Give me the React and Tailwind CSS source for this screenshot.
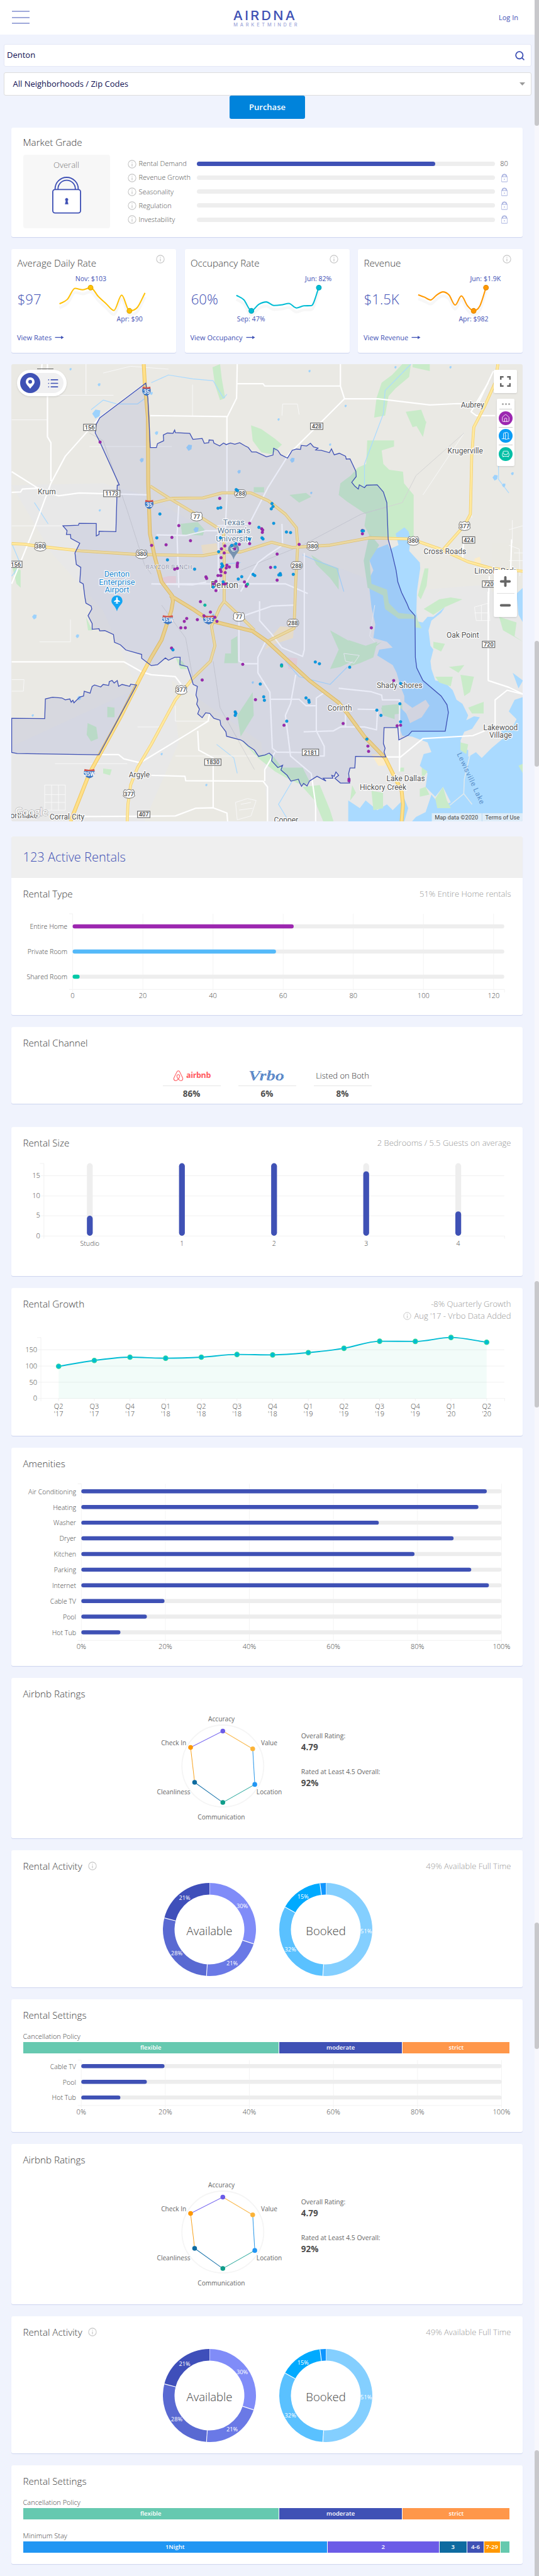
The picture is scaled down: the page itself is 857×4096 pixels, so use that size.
import React from "react";
import { Search, MapPin, List, Plus, Minus, House, DoorOpen, Armchair, Plane, GraduationCap } from "lucide-react";
import { FaAirbnb } from "react-icons/fa";

/* ---------- helpers ---------- */

// Monotone cubic interpolation through the points.
function curve(points) {
  const n = points.length;
  const d = [];
  for (let i = 0; i < n - 1; i++) d.push((points[i + 1][1] - points[i][1]) / (points[i + 1][0] - points[i][0]));
  const m = points.map((_, i) => {
    if (i === 0) return d[0];
    if (i === n - 1) return d[n - 2];
    if (d[i - 1] * d[i] <= 0) return 0;
    const avg = (d[i - 1] + d[i]) / 2;
    return Math.sign(avg) * Math.min(Math.abs(avg), 3 * Math.abs(d[i - 1]), 3 * Math.abs(d[i]));
  });
  let path = `M${points[0][0]} ${points[0][1]}`;
  for (let i = 0; i < n - 1; i++) {
    const h = (points[i + 1][0] - points[i][0]) / 3;
    path += `C${points[i][0] + h} ${points[i][1] + m[i] * h} ${points[i + 1][0] - h} ${points[i + 1][1] - m[i + 1] * h} ${points[i + 1][0]} ${points[i + 1][1]}`;
  }
  return path;
}

function InfoIcon({ className = "" }) {
  return (
    <svg viewBox="0 0 16 16" className={`shrink-0 ${className}`} fill="none" stroke="#c4c4c4">
      <circle cx="8" cy="8" r="7" strokeWidth="1.2" />
      <path d="M8 7v5M8 4v1.4" strokeWidth="1.4" />
    </svg>
  );
}

function Lock({ className = "", stroke = 2 }) {
  return (
    <svg viewBox="0 0 50 64" className={className} fill="none" stroke="currentColor" strokeWidth={stroke}>
      <path d="M5 22V21a20 20 0 0 1 40 0v1" />
      <path d="M10 22V21a15 15 0 0 1 30 0v1" />
      <rect x="1" y="22" width="48" height="40.5" rx="4" fill="#fff" />
      <path d="M25 37a2.6 2.6 0 0 1 1.3 4.7l1.3 5.6h-5.2l1.3-5.6A2.6 2.6 0 0 1 25 37z" fill="currentColor" strokeWidth="0.6" />
    </svg>
  );
}

function Card({ title, info, note, note2, className = "", children }) {
  return (
    <section className={`flex w-full flex-col overflow-hidden rounded-[3px] bg-white shadow-[0_1px_1px_#cdd4ef] ${className}`}>
      <Head title={title} info={info} note={note} note2={note2} />
      {children}
    </section>
  );
}

function Head({ title, info, note, note2 }) {
  return (
    <header className="flex shrink-0 items-start justify-between px-[18.5px] pt-[15px]">
      <h2 className="flex items-center text-[15.2px] leading-5 font-light text-[#3c3c3c]">
        {title}
        {info && <InfoIcon className="ml-[9px] size-[14px]" />}
      </h2>
      <div className="text-right text-[13px] leading-[18.4px] font-light text-[#999]">
        <p className="leading-5">{note}</p>
        {note2 && (
          <p className="flex items-center justify-end gap-1">
            <InfoIcon className="size-[13px]" />
            {note2}
          </p>
        )}
      </div>
    </header>
  );
}

/* ---------- top ---------- */

function Header() {
  return (
    <header className="flex h-[55px] items-center justify-between bg-white pr-[26px] pl-[18.5px]">
      <div className="flex w-[45px] flex-col gap-[7.2px]">
        <span className="h-[2px] w-[28px] bg-[#9fa8da]" />
        <span className="h-[2px] w-[28px] bg-[#9fa8da]" />
        <span className="h-[2px] w-[28px] bg-[#9fa8da]" />
      </div>
      <svg viewBox="400 9 114 42" className="h-[38.7px] w-[105px]">
        <text x="402" y="34.7" textLength="110" lengthAdjust="spacingAndGlyphs" fontFamily="Inter, sans-serif" fontWeight="500" fontSize="22.5" letterSpacing="3.4" fill="#3f51b5">AIRDNA</text>
        <text x="402.5" y="46" textLength="110" lengthAdjust="spacing" fontFamily="Inter, sans-serif" fontWeight="500" fontSize="8" fill="#9fa8da">MARKETMINDER</text>
      </svg>
      <a className="w-[45px] pt-[2px] text-right text-[11px] whitespace-nowrap text-[#3f51b5]">Log In</a>
    </header>
  );
}

function Filters() {
  return (
    <div className="flex flex-col items-center px-[5.5px] pt-[15px] text-[#0f0f52]">
      <div className="flex h-[36px] w-full items-center justify-between rounded-[3px] border border-[#e4e7f6] bg-white pr-[9px] pl-[4.5px] text-[13px]">
        Denton
        <Search className="size-[17px] text-[#3f51b5]" strokeWidth={2.6} />
      </div>
      <div className="mt-[9px] flex h-[37px] w-full items-center justify-between rounded-[3px] border border-[#ddd] bg-white pr-[9px] pl-[14px] text-[13px]">
        All Neighborhoods / Zip Codes
        <svg viewBox="0 0 9 5" className="h-[5px] w-[9px]"><path d="M0 0h9L4.5 5z" fill="#999" /></svg>
      </div>
      <button className="h-[37px] w-[120px] rounded-[3px] bg-[#0083db] text-[13px] font-semibold text-white">Purchase</button>
    </div>
  );
}

const grades = ["Rental Demand", "Revenue Growth", "Seasonality", "Regulation", "Investability"];

function MarketGrade() {
  return (
    <section className="mt-[14px] h-[174px] w-full rounded-[3px] bg-white px-[18.5px] pt-[13px] shadow-[0_1px_1px_#cdd4ef]">
      <h2 className="text-[15.2px] leading-5 font-light text-[#3c3c3c]">Market Grade</h2>
      <div className="mt-[9.5px] flex">
        <div className="flex h-[117px] w-[138px] shrink-0 flex-col items-center rounded bg-[#f7f7f7] pt-[6px]">
          <span className="text-[13px] leading-5 font-light text-[#777]">Overall</span>
          <Lock className="mt-[9px] h-[59px] w-[46px] text-[#3f51b5]" />
        </div>
        <div className="flex flex-col pt-[4px] pl-[28px]">
          {grades.map((g, i) => (
            <div key={g} className="flex h-[22.14px] items-center">
              <InfoIcon className="size-[14px]" />
              <span className="w-[96px] shrink-0 pl-[4px] text-[11px] font-light whitespace-nowrap text-[#555]">{g}</span>
              <div className="h-[7px] w-[474px] shrink-0 rounded-full bg-[#eee]">
                {i === 0 && <div className="h-full w-[80%] rounded-full bg-[#3f51b5]" />}
              </div>
              <div className="flex w-[30px] shrink-0 justify-center">
                {i === 0 ? <span className="text-[11px] font-light text-[#444]">80</span> : <Lock className="h-[14px] w-[10px] text-[#8e9ad6]" stroke={4} />}
              </div>
            </div>
          ))}
        </div>
      </div>
    </section>
  );
}

const stats = [
  {
    title: "Average Daily Rate", value: "$97", link: "View Rates", color: "#ffc107", dark: "#e0a800", x0: 103, step: 13.4,
    ys: [316, 293, 236, 243, 232, 278, 315, 350, 271, 352, 335, 259], hi: 4, lo: 9, hiText: "Nov: $103", loText: "Apr: $90", hiX: 157, loX: 224,
  },
  {
    title: "Occupancy Rate", value: "60%", link: "View Occupancy", color: "#00bcd4", dark: "#00a5bb", x0: 108.7, step: 12.92,
    ys: [272, 295, 352, 318, 306, 324, 321, 314, 337, 326, 325, 232], hi: 11, lo: 2, hiText: "Jun: 82%", loText: "Sep: 47%", hiX: 250, loX: 134,
  },
  {
    title: "Revenue", value: "$1.5K", link: "View Revenue", color: "#ff9800", dark: "#e28600", x0: 124, step: 10.62,
    ys: [269, 281, 296, 270, 254, 270, 322, 275, 326, 352, 327, 232], hi: 11, lo: 9, hiText: "Jun: $1.9K", loText: "Apr: $982", hiX: 240, loX: 219.5,
  },
];

function StatCard({ s }) {
  const pts = s.ys.map((y, i) => [s.x0 + i * s.step, y / 3]);
  const d = curve(pts);
  return (
    <section className="flex h-[165px] w-[262px] flex-col rounded-[3px] bg-white shadow-[0_1px_1px_#cdd4ef]">
      <div className="flex items-start justify-between pt-[9px] pr-[18px] pl-[9.5px]">
        <h2 className="pt-[3px] text-[15.2px] leading-5 font-light text-[#3c3c3c]">{s.title}</h2>
        <InfoIcon className="size-[14px]" />
      </div>
      <svg viewBox="20 45.5 284 106" className="w-full" fontFamily="Open Sans, sans-serif">
        <text x="30.5" y="106.7" fontSize="24" fontWeight="300" fill="#3f51b5">{s.value}</text>
        <path d={d} transform="translate(0 7)" fill="none" stroke="#000" strokeOpacity="0.03" strokeWidth="5" />
        <path d={d} fill="none" stroke={s.color} strokeWidth="2.2" />
        {[s.hi, s.lo].map((k) => (
          <circle key={k} cx={pts[k][0]} cy={pts[k][1]} r="4.2" fill={s.color} stroke={s.dark} strokeWidth="1.2" />
        ))}
        <text x={s.hiX} y="66" fontSize="11.5" textAnchor="middle" fill="#3f51b5">{s.hiText}</text>
        <text x={s.loX} y="136" fontSize="11.5" textAnchor="middle" fill="#3f51b5">{s.loText}</text>
      </svg>
      <a className="flex items-center gap-[5px] pt-[3px] pl-[9px] text-[11px] leading-[16px] text-[#3f51b5]">
        {s.link}
        <svg viewBox="0 0 16 8" className="h-[7px] w-[15px]"><path d="M0 4h12" stroke="#3f51b5" strokeWidth="1.5" /><path d="M11 1l5 3-5 3z" fill="#3f51b5" /></svg>
      </a>
    </section>
  );
}

/* ---------- map ---------- */

const cityLimits =
  "M424 122 430 200 434 340 437 455 455 455 458 435 476 420 475 390 487 380 503 382 508 365 510 378 552 382 561 413 588 408 594 433 607 430 608 416 620 418 622 432 639 447 650 432 658 440 670 432 683 438 697 430 712 446 722 455 732 478 745 478 775 503 794 494 796 459 808 470 816 492 836 510 850 470 862 463 874 465 876 444 892 447 903 433 912 452 925 458 918 468 935 470 958 482 964 462 972 493 987 485 1005 500 1007 515 1018 514 1025 540 1035 578 1036 605 1023 635 1032 655 1042 670 1045 648 1060 663 1066 650 1097 648 1115 685 1125 740 1129 930 1140 1000 1152 1090 1157 1150 1168 1205 1183 1260 1190 1290 1207 1325 1208 1540 1212 1595 1230 1660 1283 1740 1300 1785 1304 1825 1295 1922 1198 1922 1188 1942 1160 1967 1157 1903 1117 1903 1115 1985 1120 2010 1117 2030 1122 2055 1034 2052 1032 2112 1018 2112 1014 2140 1017 2190 990 2190 974 2165 985 2150 977 2133 972 2155 965 2150 968 2165 940 2165 948 2180 922 2155 900 2180 893 2205 883 2192 877 2207 872 2190 868 2170 846 2180 835 2150 817 2122 822 2098 808 2110 790 2075 792 2050 783 2035 770 2045 752 2052 740 2020 722 1998 708 1975 700 1967 659 1948 657 1925 642 1890 640 1865 622 1855 610 1830 598 1827 588 1852 575 1832 580 1808 572 1782 575 1760 570 1735 574 1690 562 1680 556 1645 545 1588 523 1578 524 1540 508 1540 490 1555 481 1543 458 1578 440 1583 412 1545 412 1525 366 1502 350 1475 333 1462 330 1422 305 1402 290 1403 288 1392 268 1395 268 1365 256 1325 267 1290 265 1275 250 1260 247 1230 242 1160 232 1150 235 1075 222 1060 218 1000 232 950 206 925 205 905 193 905 195 885 183 860 228 857 230 847 280 848 280 912 288 905 288 888 337 890 341 650 347 648 290 425 277 380 280 335 290 302Z";
const westParcel =
  "M34 1855 130 1857 132 1755 153 1746 180 1750 190 1760 203 1755 207 1772 212 1762 215 1775 232 1745 243 1740 245 1715 262 1725 268 1690 275 1683 293 1693 300 1680 316 1685 318 1665 326 1660 332 1673 341 1660 345 1690 355 1680 377 1690 380 1679 397 1683 288 2044 50 2037 34 2032Z";

const greens = [
  "M1068 418 1146 418 1146 450 1110 470 1115 540 1132 570 1172 580 1175 640 1203 700 1203 930 1130 930 1080 930 1060 860 1065 800 1010 735 985 700 990 640 1020 600 1040 560 1065 540Z",
  "M1170 24 1195 24 1190 90 1150 150 1130 190 1120 290 1088 300 1095 200 1110 120 1140 80Z",
  "M1180 270 1225 260 1240 330 1200 350ZM1210 340 1240 320 1230 400ZM1200 24 1250 24 1250 60 1200 40Z",
  "M618 40 640 24 645 100 655 200 640 210 625 130Z",
  "M730 340 760 360 800 410 820 440 790 490 760 480 735 420Z",
  "M525 850 575 840 595 880 590 910 530 905Z",
  "M738 660 768 660 768 687 738 687Z",
  "M842 700 890 690 905 710 870 740Z",
  "M905 1010 940 1050 985 1080 985 1190 960 1130 920 1060Z",
  "M960 1400 1000 1440 1060 1500 1110 1460 1060 1530 990 1590 960 1600 985 1500Z",
  "M655 1520 672 1520 672 1450 690 1430 692 1570 652 1570Z",
  "M690 1840 735 1720 738 1840 700 1950Z",
  "M312 1795 333 1800 333 1850 312 1850ZM255 1880 280 1900 285 1960 265 1975 252 1940Z",
  "M700 1965 750 2045 790 2040 820 2110 880 2110 900 2180 885 2205 845 2175 800 2130 750 2060Z",
  "M1110 1790 1170 1780 1170 1830 1120 1840ZM1165 2110 1175 2110 1175 2130 1160 2130Z",
  "M880 2210 930 2200 960 2330 970 2388 940 2388 915 2280Z",
  "M250 1330 268 1400 256 1400ZM34 1060 60 1090 60 1180 48 1160ZM300 2115 325 2120 320 2150 300 2140Z",
  "M510 1540 530 1560 545 1600 525 1600Z",
];

const whiteRoads = [
  "M34 1563H360L412 1615 440 1630 510 1640 527 1680",
  "M288 2043H345L360 2065 408 2085 560 1920 605 1870 610 1830",
  "M440 2150 538 2155 540 2178 765 2180 778 2210V2388M770 2180 770 2120 800 2030",
  "M245 2363 510 2360 570 2320 620 2318 660 2345 662 2388",
  "M690 24 688 200 660 300 660 700 655 890",
  "M437 290 660 295M690 125H765L770 137H990L1002 203H1100L1250 235 1330 228 1390 230 1435 60",
  "M1420 120 1370 270 1385 290 1440 290M990 24V137",
  "M1002 203 840 490 780 660 725 850 630 860",
  "M34 580 110 665 65 670 60 685 34 687M110 665 170 705 230 690 431 700",
  "M138 24V400L148 430V630",
  "M424 122 290 300 240 400 190 500 148 640 100 870 34 1160",
  "M695 1330 695 1560 712 1573H748M772 1460 750 1540 750 1620 785 1720 792 2010 805 2030 880 2032",
  "M860 1630 845 1780 830 1840 845 2050 905 2140 918 2300 918 2388",
  "M788 1757H870L890 1790 918 1790M985 1700 1080 1718 1110 1735 1112 1760 1162 1760V2130",
  "M945 1720 920 1750 920 1920 943 2000 943 2050 930 2050",
  "M883 1925 970 1920 990 1900 1060 1900 1095 1915 1098 1810 1040 1808M1005 1815V1900",
  "M885 1000V1500L880 1535 820 1490 790 1420 755 1350 755 1250M455 907 540 910 600 885 640 885M485 1160H830L895 1210",
  "M520 750 515 910 520 1180M635 880 635 1200M700 1330 750 1300 790 1275 858 1270",
  "M440 1160 560 1165 600 1150M820 850 822 960 780 1010 750 1050 700 1200",
  "M1420 1200V1660L1480 1695 1521 1730M1423 1120 1420 1290M1348 950 1345 1040",
  "M575 1920 578 2020 620 2060 620 2318M122 24 120 80",
  "M1122 2055H1165L1230 1960 1375 1945 1410 1920",
  "M1440 1920 1440 1760 1475 1710 1521 1730M1488 930 1485 1100",
];
const thinRoads = [
  "M250 24V180M140 185H330M250 180 250 24M34 312H137M260 450H500M560 130V290M820 290 822 230 865 230 870 285M300 70 380 35 490 50",
  "M34 860H180M115 1460H205V1345M34 1655H70L68 1715H34M400 1900H470M160 2090H370M510 2050H760M510 1790V1870H610",
  "M130 2200H190V2330H130ZM130 2250H190M130 2290H190M150 2200V2330M170 2200V2330",
  "M685 2290 720 2270 745 2280 730 2360 690 2380ZM700 2300 730 2290M695 2330 735 2320",
  "M1380 1280 1420 1260 1425 1350 1385 1350ZM1380 1310H1422M1400 1270V1350M1090 1270 1075 1430 1090 1460",
  "M1480 880 1520 860M1480 960 1510 980 1512 1120M1495 1000H1521M1480 1040H1521M1490 830V950M1000 1520 1045 1530 1030 1570 1005 1560ZM1230 700 1350 380M1370 760 1372 820",
];
const yellowRoads = [
  "M34 952 70 955 110 965 235 990 400 1008 590 1014 650 995 700 995 790 945 850 972 960 960 1075 922 1195 928 1280 980 1360 1045 1430 1080 1521 1095",
  "M437 745 500 718 590 716 645 690 730 690 780 730 830 800 862 870 866 960 860 1150 855 1390 775 1460",
  "M437 655 490 715 570 800 650 890 652 1000 652 1250 700 1330 740 1400",
  "M652 1250 640 1280 615 1380 625 1480 612 1560 560 1650 510 1760 440 1990 400 2110 380 2200 372 2300 370 2388",
  "M1448 24 1440 120 1410 240 1378 350 1372 500 1368 800 1350 860 1290 980",
];
const freeways = [
  "M418 24 421 120 430 300 431 640 436 900 450 1020 470 1150 500 1220 503 1250 498 1300 470 1450 440 1540 410 1640 350 1850 288 2050 260 2140 205 2388",
  "M495 1220 560 1290 610 1350 735 1405 775 1455 900 1660 985 1775 1010 1830 1060 1950 1120 2060 1145 2150 1168 2230 1172 2300 1168 2388",
];
const streams = [
  "M440 120 490 80 560 100 620 110 650 200 660 180",
  "M34 950 60 1060 34 1120M100 740 140 850M1195 24 1120 160 1115 280 1060 540 1060 660",
  "M265 260 300 210 340 230 400 230 430 190M640 1060 700 1050M880 1010 920 1040 980 1080 1000 1200",
  "M1450 550 1450 620 1480 690M830 1560 870 1640 960 1680 1010 1590M840 2388 810 2300 850 2180M630 1990 680 2060 690 2140",
];
const ponds = [
  [280, 280, 14], [455, 380, 6], [412, 520, 7], [550, 455, 10], [850, 520, 8], [440, 175, 5], [288, 130, 5], [695, 580, 6], [225, 1430, 6], [100, 1330, 8],
  [570, 880, 9], [1440, 610, 9], [1465, 650, 6], [230, 1750, 7], [735, 1670, 4], [620, 1320, 4], [290, 780, 4], [900, 60, 4], [810, 310, 4], [1005, 240, 4],
  [1150, 40, 4], [1310, 40, 4], [205, 50, 4], [960, 440, 4], [905, 690, 4], [95, 1840, 4], [480, 1400, 4], [470, 2040, 4], [600, 2200, 4], [1490, 590, 5],
];

const purpleDots = [[291,427],[639,718],[520,859],[500,920],[483,958],[441,961],[554,937],[726,847],[761,875],[764,882],[763,894],[726,952],[696,956],[683,979],[870,956],[1054,884],[1054,901],[806,1006],[654,964],[644,979],[652,1000],[643,1025],[691,1052],[690,1062],[690,1072],[660,1064],[667,1073],[658,1078],[641,1086],[643,1097],[655,1102],[634,1117],[642,1117],[599,1124],[601,1132],[628,1147],[621,1160],[655,1160],[650,1160],[628,1195],[583,1252],[787,1075],[806,1141],[711,1150],[717,1166],[716,1172],[508,1084],[516,1080],[612,1306],[593,1325],[625,1333],[631,1354],[574,1345],[543,1339],[536,1354],[526,1387],[539,1387],[499,1492],[706,1576],[588,1657],[743,1759],[662,1858],[826,1891],[998,1882],[1145,1660],[1080,1387],[1155,1894],[1165,1891],[1070,1999],[1072,2026],[1015,2170],[1015,2178]];
const blueDots = [[687,673],[691,678],[634,769],[642,766],[465,799],[456,922],[487,1036],[791,745],[794,760],[789,772],[796,847],[753,868],[698,889],[641,922],[725,928],[762,922],[765,928],[833,892],[845,895],[1053,886],[1057,886],[686,952],[674,961],[636,994],[566,1084],[645,1057],[648,1067],[645,1073],[800,1074],[736,1111],[741,1117],[703,1123],[693,1135],[815,1107],[811,1114],[816,1114],[853,1111],[649,1150],[620,1177],[503,1501],[917,1564],[929,1573],[1017,1591],[757,1678],[767,1744],[769,1762],[890,1750],[898,1762],[899,1772],[684,1822],[686,1830],[684,1840],[834,1870],[1165,1675],[1163,1780],[1096,1813],[1108,1840],[1165,1873],[1067,1963],[819,1579]];
const tealDots = [[720,1162],[596,1270],[819,1585]];

const places = [
  ["Krum", 136, 696], ["Aubrey", 1374, 249], ["Krugerville", 1353, 486], ["Cross Roads", 1294, 1005], ["Lincoln Park", 1440, 1106],
  ["Denton", 653, 1182, 15], ["Oak Point", 1346, 1439], ["Shady Shores", 1162, 1700], ["Corinth", 988, 1817], ["Lakewood", 1456, 1916], ["Village", 1456, 1956],
  ["Lake Dallas", 1180, 2180], ["Hickory Creek", 1114, 2226], ["Argyle", 405, 2160], ["Corral City", 195, 2378], ["Northlake", 62, 2373], ["Copper", 832, 2395],
];
const boxShields = [["156", 261, 351], ["428", 921, 345], ["1173", 325, 693], ["156", 46, 1059], ["424", 1363, 933], ["720", 1421, 1161], ["720", 1421, 1473], ["2181", 903, 2031], ["1830", 619, 2082], ["407", 418, 2352]];
const usShields = [["288", 699, 693], ["77", 572, 811], ["377", 1351, 860], ["380", 117, 967], ["380", 412, 1006], ["380", 909, 964], ["380", 1202, 937], ["288", 863, 1065], ["77", 695, 1330], ["288", 852, 1362], ["377", 527, 1708], ["377", 375, 2245]];
const interstates = [["35", 426, 163], ["35", 434, 748], ["35W", 488, 1345], ["35E", 607, 1345], ["35W", 260, 2140]];

const mx = (x) => x / 1.688;
const my = (y) => 620 + y / 3;

function Lines({ list, stroke, width, opacity }) {
  return list.map((d) => <path key={d} d={d} fill="none" stroke={stroke} strokeWidth={width} strokeOpacity={opacity} strokeLinejoin="round" vectorEffect="non-scaling-stroke" />);
}

function MapCanvas() {
  const flat = "translate(0 620) scale(0.59242 0.33333)";
  return (
    <svg viewBox="19.5 628 881 788" preserveAspectRatio="none" className="block h-full w-full" fontFamily="Roboto, sans-serif">
      <rect x="19" y="628" width="883" height="790" fill="#eae9e4" />
      <g transform={flat}>
        <path d="M34 650 300 640 420 700 600 880 880 1000 1160 1200 1521 1150 1521 2388 34 2388 34 2000 400 1700 300 1300 150 1000Z" fill="#e8e8e8" />
        <path d="M500 1660 760 1980 780 2388 420 2388 520 1980ZM1430 950 1521 950 1521 1220 1430 1200Z" fill="#eae9e3" />
        {greens.map((d) => <path key={d} d={d} fill="#c9ebc9" />)}
        <path d="M490 1120H512V1160H470V1130ZM838 1540 865 1545 862 1600 838 1600Z" fill="#f3d9dd" />
        <path d="M815 1380 855 1385 852 1440 800 1470 770 1500 790 1430ZM585 960 630 950 635 1000 590 1005ZM1080 2040H1120V2100H1100ZM1380 1030 1395 1020 1400 1050 1380 1060Z" fill="#fbecca" />
        <Lines list={streams} stroke="#aadaff" width={1.2} />
      </g>
      {ponds.map(([x, y, r]) => <path key={x + "-" + y} d={`M${mx(x) - r / 2} ${my(y)}l${r * 0.4} ${-r * 0.5} ${r * 0.6} ${r * 0.1} ${-r * 0.1} ${r * 0.7} ${-r * 0.5} ${r * 0.3}z`} fill="#9dd2fc" />)}
      <g transform="translate(600 900) scale(0.33333)">
        <path d="M140 140 205 115 215 140 260 120 245 60 290 28 312 50 322 90 315 150 370 210 372 240 355 360 352 470 360 515 385 520 410 490 440 490 500 440 480 470 430 510 415 560 425 640 440 660 425 720 430 760 450 820 500 830 540 870 560 920 590 940 620 1000 610 1025 650 1005 680 1010 640 1070 600 1085 580 1130 585 1165 620 1180 620 1215 660 1190 690 1220 740 1170 800 1120 790 1080 850 1060 870 1020 830 980 860 920 903 905 903 1548 330 1548 350 1525 400 1500 430 1410 480 1470 530 1450 490 1370 450 1420 400 1370 410 1300 370 1260 390 1200 430 1190 410 1140 330 1110 280 1105 262 1060 268 990 270 960 300 990 320 1040 360 1000 330 960 290 930 290 900 270 850 250 780 230 740 150 690 160 660 230 650 200 620 130 600 140 530 120 440 110 350 105 300 130 250 110 200Z" fill="#aadaff" />
        <path d="M300 980 400 920 420 950 380 1010 320 1040Z" fill="#e4e4e6" />
        <path d="M0 1440 60 1480 90 1440 150 1490 200 1460 230 1490 290 1430 310 1480 290 1548 0 1548Z" fill="#aadaff" />
        <path d="M870 370 903 340 903 520 880 480ZM850 780 903 820 880 860Z" fill="#aadaff" />
        <path d="M110 60 160 120 110 200 120 320 200 350 210 420 260 470 345 480 380 550 345 545 340 500 260 500 190 450 180 380 100 340 80 200Z" fill="#c3e6cb" />
        <path d="M395 240 415 240 405 330 375 400 360 380ZM390 450 470 400 530 390 590 400 500 440 440 480ZM780 490 870 520 860 590 903 620 870 600 800 560ZM580 790 650 800 630 880 600 900ZM440 620 500 630 480 670 440 650ZM520 750 600 740 570 780ZM450 800 540 800 530 850 470 830ZM620 960 700 930 700 990 640 990ZM580 1140 620 1150 610 1200 580 1180ZM450 1430 490 1370 510 1440 530 1480 460 1480ZM120 1390 180 1400 180 1480 130 1490ZM380 1270 410 1290 380 1330ZM370 1380 400 1370 420 1410 370 1420ZM880 1260 903 1250 903 1300ZM20 1360 40 1400 10 1440ZM170 960 240 950 240 1020 180 1000ZM0 610 90 640 150 620 130 700 60 730 0 750 50 690Z" fill="#c9ebc9" />
        <path d="M630 1200 600 1330 597 1405 525 1465M597 1405 640 1460" stroke="#dfe9ee" strokeWidth="5" fill="none" />
      </g>
      <g transform={flat}>
        <Lines list={thinRoads} stroke="#f8f8f8" width={1} />
        <Lines list={["M260 380 300 420 370 780 420 1060 440 1110M1350 380 1210 600 1170 740 1050 800 880 960 700 1090M470 1270 540 1440 560 1640M620 1560 640 1800 740 2120"]} stroke="#d3d3d3" width={1} />
        <Lines list={whiteRoads} stroke="#fff" width={2.2} />
        <Lines list={yellowRoads} stroke="#f3cf6a" width={4.6} />
        <Lines list={yellowRoads} stroke="#ffe9a0" width={3} />
        <Lines list={freeways} stroke="#efc65c" width={6} />
        <Lines list={freeways} stroke="#ffe08a" width={4} />
        {[cityLimits, westParcel].map((d) => <path key={d} d={d} fill="#3f51b5" fillOpacity="0.11" stroke="#3f51b5" strokeWidth="1.3" vectorEffect="non-scaling-stroke" />)}
      </g>
      <g fontSize="10" textAnchor="middle" fill="#444" fontWeight="500">
        {boxShields.map(([t, x, y]) => (
          <g key={t + x + y}>
            <rect x={mx(x) - 3.4 * t.length - 0.5} y={my(y) - 5.5} width={6.8 * t.length + 1} height="11" fill="#fff" stroke="#666" strokeWidth="1.2" />
            <text x={mx(x)} y={my(y) + 3.6}>{t}</text>
          </g>
        ))}
        {usShields.map(([t, x, y]) => (
          <g key={t + x + y}>
            <path d={t === "288" ? "M-5-6.5H5A5 6.5 0 0 1 5 6.5H-5A5 6.5 0 0 1-5-6.5Z" : "M-7.5-7 -4-6 0-7.5 4-6 7.5-7 9.5-3 9 1 10 4 6 7 0 8-6 7-10 4-9 1-9.5-3Z"} transform={`translate(${mx(x)} ${my(y)})`} fill="#fff" stroke="#666" />
            <text x={mx(x)} y={my(y) + 3.8}>{t}</text>
          </g>
        ))}
      </g>
      {interstates.map(([t, x, y]) => (
        <g key={t + x + y} transform={`translate(${mx(x)} ${my(y)}) scale(${t.length > 2 ? 1.3 : 1} 1)`}>
          <path d="M-7-4H7Q9 5 0 8.5Q-9 5-7-4Z" fill="#3f78c3" />
          <path d="M-6.5-7.5Q0-5 6.5-7.5L7-4H-7Z" fill="#d4574f" />
          <text y="4.2" transform={t.length > 2 ? "scale(0.77 1)" : undefined} fontSize="9.5" fontWeight="700" textAnchor="middle" fill="#fff">{t}</text>
        </g>
      ))}
      <g textAnchor="middle" fill="#555" stroke="#fff" strokeWidth="2.5" strokeLinejoin="round" style={{ paintOrder: "stroke" }} fontSize="13">
        {places.map(([t, x, y, s]) => <text key={t} x={mx(x)} y={my(y)} fontSize={s || 13}>{t}</text>)}
        <g fill="#607d9a" fontSize="14.2">
          <text x={mx(680)} y={my(858)}>Texas</text>
          <text x={mx(680)} y={my(900)}>Woman's</text>
          <text x={mx(680)} y={my(942)}>University</text>
        </g>
        <g fill="#1c87cf" fontSize="13.8">
          <text x={mx(340)} y={my(1122)}>Denton</text>
          <text x={mx(340)} y={my(1164)}>Enterprise</text>
          <text x={mx(340)} y={my(1206)}>Airport</text>
        </g>
        <text x={mx(492)} y={my(1083)} fontSize="10" fill="#8a8fa8" letterSpacing="0.6" strokeWidth="1">RAYZOR RANCH</text>
      </g>
      <text transform="translate(787 1300) rotate(65)" fontSize="12.5" letterSpacing="0.9" fill="#5b8fc9">Lewisville Lake</text>
      <g fill="#7893b0">
        <path d="M402.5 965C400 955 393 953 393 947A9.5 9.5 0 0 1 412 947C412 953 405 955 402.5 965Z" />
        <GraduationCap x={396.5} y={941} width={12} height={12} color="#fff" />
      </g>
      <path d="M201.5 1054C199 1044 192 1042 192 1036A9.5 9.5 0 0 1 211 1036C211 1042 204 1044 201.5 1054Z" fill="#12a5f4" />
      <Plane x={195.5} y={1030} width={12} height={12} fill="#fff" stroke="#fff" strokeWidth="1" transform="rotate(-45 201.5 1036)" />
      {[[purpleDots, "#9c27b0", "#7b1f8c"], [blueDots, "#039be5", "#0277bd"], [tealDots, "#00bfa5", "#00897b"]].map(([list, fill, edge]) =>
        list.map(([x, y]) => <circle key={fill + x + "-" + y} cx={mx(x)} cy={my(y)} r="2.4" fill={fill} stroke={edge} strokeWidth="0.5" />)
      )}
      <text x="26" y="1406" fontSize="18" fontWeight="500" fill="#fff" stroke="#777" strokeOpacity="0.5" strokeWidth="1.5" style={{ paintOrder: "stroke" }} fontFamily="Lato, sans-serif">Google</text>
      <rect x="744" y="1402" width="157" height="14" fill="#f5f5f5" fillOpacity="0.7" />
      <path d="M830.5 1402v14" stroke="#b5d9f2" />
      <g fontSize="10" fill="#444">
        <text x="749" y="1412.3">Map data ©2020</text>
        <text x="836" y="1412.3">Terms of Use</text>
      </g>
    </svg>
  );
}

function MapPanel() {
  const chip = "flex size-[22px] items-center justify-center rounded-full text-white";
  return (
    <section className="relative mt-[18px] h-[727px] w-full overflow-hidden rounded-[3px]">
      <MapCanvas />
      <span className="absolute top-[7px] left-[41px] h-px w-[26px] bg-[#666]" />
      <div className="absolute top-[9px] left-[9px] flex h-[42px] w-[79px] items-center rounded-full bg-white p-[5px] shadow-sm">
        <div className="flex h-full w-full items-center rounded-full bg-[#f0f0f1]">
          <span className="flex size-[32px] items-center justify-center rounded-full bg-[#3f51b5]">
            <svg viewBox="0 0 14 18" className="h-[18px] w-[14px]"><path fillRule="evenodd" d="M7 0a7 7 0 0 1 7 7c0 4-4.500 7.500-7 11C4.500 14.500 0 11 0 7a7 7 0 0 1 7-7zm0 4a3 3 0 1 0 0 6 3 3 0 0 0 0-6z" fill="#fff" /></svg>
          </span>
          <List className="ml-[11px] size-[19px] text-[#3f51b5]" strokeWidth={2.2} />
        </div>
      </div>
      <span className="absolute top-[9px] right-[9px] flex size-[37px] items-center justify-center rounded-[2px] bg-white text-[#666] shadow">
        <svg viewBox="0 0 18 18" className="size-[17px]" fill="none" stroke="currentColor" strokeWidth="2.6"><path d="M1.3 6V1.3H6M12 1.3h4.700V6M16.700 12v4.700H12M6 16.700H1.300V12" /></svg>
      </span>
      <div className="absolute top-[55px] right-[13px] flex h-[107px] w-[28px] flex-col items-center rounded-[2px] bg-white shadow">
        <span className="flex h-[17px] w-[20px] items-center justify-center gap-[2px] border-b border-[#ccc]">
          <i className="size-[3px] rounded-full bg-[#aaa]" /><i className="size-[3px] rounded-full bg-[#aaa]" /><i className="size-[3px] rounded-full bg-[#aaa]" />
        </span>
        <span className="flex h-[28.5px] items-center border-b border-[#ccc]"><span className={`${chip} bg-[#9c27b0]`}><House className="size-[14px]" strokeWidth={1.5} /></span></span>
        <span className="flex h-[28.5px] items-center border-b border-[#ccc]"><span className={`${chip} bg-[#0a9cf5]`}><DoorOpen className="size-[14px]" strokeWidth={1.5} /></span></span>
        <span className="flex h-[28.5px] items-center"><span className={`${chip} bg-[#00bfa5]`}><Armchair className="size-[14px]" strokeWidth={1.5} /></span></span>
      </div>
      <div className="absolute top-[327px] right-[9px] flex h-[75px] w-[37px] flex-col items-center rounded-[2px] bg-white text-[#666] shadow">
        <span className="flex flex-1 items-center"><Plus className="size-[23px]" strokeWidth={4} /></span>
        <span className="h-px w-[28px] bg-[#e0e0e0]" />
        <span className="flex flex-1 items-center"><Minus className="size-[23px]" strokeWidth={4} /></span>
      </div>
    </section>
  );
}

/* ---------- charts ---------- */

function Bar({ x, y, w, color }) {
  return <rect x={x} y={y - 3.5} width={w} height="7" rx="3.5" fill={color} />;
}

const chartText = { fontFamily: "Open Sans, sans-serif", fontSize: 12, fontWeight: 300, fill: "#444" };

function RentalType() {
  const rows = [["Entire Home", 1596.7, 381, "#9c27b0"], ["Private Room", 1640, 350.5, "#54b9f9"], ["Shared Room", 1683.5, 12, "#00c9a7"]];
  return (
    <svg viewBox="19.5 1551.2 881 198.4" className="w-full" {...chartText}>
      <path d="M119 1575h6M119 1705.5h750.5v5" fill="none" stroke="#f0f0f0" />
      {[0, 20, 40, 60, 80, 100, 120].map((v) => {
        const x = 125 + v * 6.0475;
        return (
          <g key={v}>
            <path d={`M${x} 1575V1710`} stroke="#f3f3f3" />
            <text x={x} y="1720" textAnchor="middle">{v}</text>
          </g>
        );
      })}
      {rows.map(([t, y, w, c]) => (
        <g key={t}>
          <text x="116" y={y + 4.3} fontSize="11.5" textAnchor="end">{t}</text>
          <Bar x={125} y={y} w={744} color="#eee" />
          <Bar x={125} y={y} w={w} color={c} />
        </g>
      ))}
    </svg>
  );
}

function RentalSize() {
  const bars = [["Studio", 154.6, 2095.5], ["1", 313.4, 2005], ["2", 472.2, 2005], ["3", 631, 2019], ["4", 789.7, 2088]];
  return (
    <svg viewBox="19.5 1980.5 881 219" className="w-full" {...chartText}>
      <path d="M69 2005.5h6.5V2135M869.5 2130v5" fill="none" stroke="#f0f0f0" />
      {[[0, 2130.5], [5, 2095.5], [10, 2061.5], [15, 2026.5]].map(([v, y]) => (
        <g key={v}>
          <path d={`M70 ${y}H869`} stroke="#f0f0f0" />
          <text x="69" y={y + 3.7} textAnchor="end">{v}</text>
        </g>
      ))}
      {bars.map(([t, x, y]) => (
        <g key={t}>
          <rect x={x - 5} y="2005" width="10" height="125" rx="5" fill="#eee" />
          <rect x={x - 5} y={y} width="10" height={2130 - y} rx="5" fill="#3f51b5" />
          <text x={x} y="2147.5" fontSize="11.5" textAnchor="middle">{t}</text>
        </g>
      ))}
    </svg>
  );
}

function RentalGrowth() {
  const ys = [1218, 1190, 1174, 1179, 1174, 1161, 1163, 1152, 1131, 1097, 1098, 1079, 1102];
  const labels = ["Q2 '17", "Q3 '17", "Q4 '17", "Q1 '18", "Q2 '18", "Q3 '18", "Q4 '18", "Q1 '19", "Q2 '19", "Q3 '19", "Q4 '19", "Q1 '20", "Q2 '20"];
  const pts = ys.map((y, i) => [101 + i * 61.46, 1920 + y / 2.8]);
  const d = curve(pts);
  return (
    <svg viewBox="19.5 2279.7 881 195" className="w-full" {...chartText}>
      <path d="M64 2305.5h6.5V2415M869.5 2410v5" fill="none" stroke="#f0f0f0" />
      {[[0, 2410.5], [50, 2382.5], [100, 2354.5], [150, 2326.5]].map(([v, y]) => (
        <g key={v}>
          <path d={`M65 ${y}H869`} stroke="#f0f0f0" />
          <text x="64" y={y + 4} textAnchor="end">{v}</text>
        </g>
      ))}
      <path d={`${d}V2410.5H101Z`} fill="#1dc9a0" fillOpacity="0.06" />
      <path d={d} fill="none" stroke="#00bcd4" strokeWidth="2" />
      {pts.map(([x, y], i) => (
        <g key={x}>
          <path d={`M${x} 2410v5`} stroke="#f0f0f0" />
          <circle cx={x} cy={y} r="4" fill="#00bcd4" stroke="#2fd6a0" strokeWidth="1.4" />
          <text x={x} y="2428.2" textAnchor="middle">{labels[i].slice(0, 2)}</text>
          <text x={x} y="2441.2" textAnchor="middle">{labels[i].slice(3)}</text>
        </g>
      ))}
    </svg>
  );
}

function PercentBars({ rows, top, first, viewTop, viewHeight }) {
  const bottom = first + (rows.length - 1) * 27 + 13.9;
  return (
    <svg viewBox={`19.5 ${viewTop} 881 ${viewHeight}`} className="w-full" {...chartText}>
      <path d={`M134 ${bottom}H864.5M134 ${top}h6`} stroke="#f0f0f0" />
      {[0, 20, 40, 60, 80, 100].map((v) => {
        const x = 140 + v * 7.242;
        return (
          <g key={v}>
            <path d={`M${x} ${top}V${bottom + 4}`} stroke="#f3f3f3" />
            <text x={x} y={bottom + 14.7} textAnchor="middle">{v}%</text>
          </g>
        );
      })}
      {rows.map(([t, v], i) => (
        <g key={t}>
          <text x="131" y={first + i * 27 + 4.7} fontSize="11.5" textAnchor="end">{t}</text>
          <Bar x={140} y={first + i * 27} w={724.2} color="#ededed" />
          <Bar x={140} y={first + i * 27} w={v * 7.242} color="#3f51b5" />
        </g>
      ))}
    </svg>
  );
}

const amenities = [["Air Conditioning", 96.5], ["Heating", 94.5], ["Washer", 70.8], ["Dryer", 88.6], ["Kitchen", 79.3], ["Parking", 92.8], ["Internet", 97], ["Cable TV", 19.8], ["Pool", 15.6], ["Hot Tub", 9.3]];

function Ratings({ className }) {
  const p = [[383.9, 2983.6, "#6c5ce7"], [435.4, 3014.3, "#fbb338"], [439, 3075.7, "#2196f3"], [383.9, 3106.8, "#0f9d8a"], [335.3, 3072, "#0e6ba0"], [328.3, 3011.8, "#ff9800"]];
  const lines = ["#f9b94f", "#2a97e8", "#26a69a", "#1b75ac", "#f8a320", "#7b6cf0"];
  return (
    <Card title="Airbnb Ratings" className={className}>
      <div className="flex">
        <svg viewBox="260 2930 240 238.5" className="ml-[222.4px] h-[220px] w-[221.4px]" {...chartText} fontSize="11" fontWeight="400" fill="#666">
          <circle cx="383.9" cy="3043.9" r="70.5" fill="none" stroke="#f5f5f5" strokeWidth="2" />
          {p.map(([x, y], i) => <path key={x + y} d={`M${x} ${y}L${p[(i + 1) % 6][0]} ${p[(i + 1) % 6][1]}`} stroke={lines[i]} strokeWidth="1.1" />)}
          {p.map(([x, y, c]) => <circle key={c} cx={x} cy={y} r="4.1" fill={c} />)}
          <text x="381.5" y="2966.4" textAnchor="middle">Accuracy</text>
          <text x="449.6" y="3008.2">Value</text>
          <text x="321" y="3008.2" textAnchor="end">Check In</text>
          <text x="270.3" y="3093">Cleanliness</text>
          <text x="442" y="3093">Location</text>
          <text x="381.3" y="3136.4" textAnchor="middle">Communication</text>
        </svg>
        <div className="pt-[49px] pl-[17px] text-[10.4px] leading-4 text-[#666]">
          <p>Overall Rating:</p>
          <p className="text-[13.5px] leading-5 font-bold text-[#4d4d4d]">4.79</p>
          <p className="mt-[20.5px]">Rated at Least 4.5 Overall:</p>
          <p className="text-[13.5px] leading-5 font-bold text-[#4d4d4d]">92%</p>
        </div>
      </div>
    </Card>
  );
}

function Donut({ label, slices }) {
  let acc = 0;
  const at = (f, r) => [80 + r * Math.sin(f * 2 * Math.PI), 80 - r * Math.cos(f * 2 * Math.PI)];
  return (
    <svg viewBox="0 0 160 160" className="size-[148px]" fontFamily="Open Sans, sans-serif">
      {slices.map(([pct, color]) => {
        const a = acc / 100;
        acc += pct;
        const b = acc / 100;
        const big = pct > 50 ? 1 : 0;
        const [x1, y1] = at(a, 80), [x2, y2] = at(b, 80), [x3, y3] = at(b, 60), [x4, y4] = at(a, 60);
        const [lx, ly] = at((a + b) / 2, 69.5);
        return (
          <g key={color}>
            <path d={`M${x1} ${y1}A80 80 0 ${big} 1 ${x2} ${y2}L${x3} ${y3}A60 60 0 ${big} 0 ${x4} ${y4}Z`} fill={color} />
            <path d={`M${x1} ${y1}L${x4} ${y4}`} stroke="#fff" strokeWidth="1.2" />
            {pct > 5 && <text x={lx} y={ly + 4} fontSize="10" textAnchor="middle" fill="#fff">{pct}%</text>}
          </g>
        );
      })}
      <text x="80" y="90" fontSize="20" fontWeight="300" textAnchor="middle" fill="#444">{label}</text>
    </svg>
  );
}

function Activity({ className }) {
  return (
    <Card title="Rental Activity" info note="49% Available Full Time" className={className}>
      <div className="flex justify-center gap-[37px] pt-[17px] pl-px">
        <Donut label="Available" slices={[[30, "#808cf8"], [21, "#6a79e6"], [28, "#5969d2"], [21, "#3f4fba"]]} />
        <Donut label="Booked" slices={[[51, "#84cfff"], [32, "#5ac1ff"], [15, "#00aaff"], [2, "#1096ff"]]} />
      </div>
    </Card>
  );
}

function Stacked({ title, parts, className }) {
  return (
    <div className={`px-[18.5px] ${className}`}>
      <p className="text-[11px] leading-[18px] font-light text-[#444]">{title}</p>
      <div className="flex h-[18px] w-[774px] gap-px">
        {parts.map(([t, w, c]) => (
          <div key={c} className="flex items-center justify-center overflow-hidden text-[9.5px] font-semibold text-white" style={{ flex: `${w} 1 0px`, background: c }}>{t}</div>
        ))}
      </div>
    </div>
  );
}

const policy = [["flexible", 745, "#66c9b0"], ["moderate", 358, "#3f51b5"], ["strict", 312, "#ff974a"]];
const minStay = [["1Night", 887, "#2196f3"], ["2", 324, "#6c5ce7"], ["3", 80, "#0e6ba0"], ["4-6", 47, "#3f51b5"], ["7-29", 46, "#ff9800"], ["", 27, "#66c9ae"]];

function Channel({ children, value }) {
  return (
    <div className="flex w-[92px] flex-col items-center">
      <div className="flex h-[44px] w-full items-center justify-center border-b border-[#e6e6e6] pt-[12px] text-[13px] font-light whitespace-nowrap text-[#333]">{children}</div>
      <strong className="mt-[2px] text-[13.5px] leading-5 font-bold text-[#4d4d4d]">{value}</strong>
    </div>
  );
}

function Scrollbar() {
  const thumb = "w-full shrink-0 bg-[#c8c8cb]";
  return (
    <aside className="flex w-[7px] shrink-0 flex-col bg-[#f7f7fc]">
      <i className={`${thumb} h-[200px] rounded-b-full`} />
      <i className={`${thumb} mt-[819px] h-[200px] rounded-full`} />
      <i className={`${thumb} mt-[818px] h-[201px] rounded-full`} />
      <i className={`${thumb} mt-[819px] h-[201px] rounded-full`} />
      <i className={`${thumb} mt-[638px] h-[200px] rounded-t-full`} />
    </aside>
  );
}

export default function App() {
  return (
    <div className="flex h-[4096px] w-[857px] overflow-hidden bg-[#f0f3fd] font-['Open_Sans',sans-serif]">
      <div className="flex flex-1 flex-col">
        <Header />
        <Filters />
        <main className="flex w-[849px] flex-col px-[18px]">
          <MarketGrade />
          <div className="mt-[19px] flex justify-between">
            {stats.map((s) => <StatCard key={s.title} s={s} />)}
          </div>
          <MapPanel />
          <section className="mt-6 flex h-[284px] w-full flex-col overflow-hidden rounded-[3px] bg-white shadow-[0_1px_1px_#cdd4ef]">
            <h1 className="flex h-[66px] shrink-0 items-center bg-[#efefef] pl-[18.5px] text-[20px] font-light text-[#3f51b5]">123 Active Rentals</h1>
            <Head title="Rental Type" note="51% Entire Home rentals" />
            <RentalType />
          </section>
          <Card title="Rental Channel" className="mt-[19px] h-[122px]">
            <div className="flex justify-center gap-[28px] pt-[15px]">
              <Channel value="86%">
                <FaAirbnb className="mr-[3px] size-[19px] text-[#ff5a5f]" />
                <span className="text-[12.5px] font-bold tracking-tight text-[#ff5a5f]">airbnb</span>
              </Channel>
              <Channel value="6%">
                <svg viewBox="0 0 64 28" className="h-[25.8px] w-[59px]">
                  <defs>
                    <pattern id="stripes" width="2.6" height="4" patternUnits="userSpaceOnUse" patternTransform="rotate(-20)">
                      <rect width="2.6" height="4" fill="#8fb9ea" />
                      <rect width="1.4" height="4" fill="#3563ad" />
                    </pattern>
                  </defs>
                  <text x="0" y="22" textLength="62" lengthAdjust="spacingAndGlyphs" fontFamily="Liberation Serif, serif" fontStyle="italic" fontWeight="700" fontSize="25" fill="url(#stripes)">Vrbo</text>
                </svg>
              </Channel>
              <Channel value="8%">Listed on Both</Channel>
            </div>
          </Card>
          <Card title="Rental Size" note="2 Bedrooms / 5.5 Guests on average" className="mt-[37px] h-[237px]">
            <RentalSize />
          </Card>
          <Card title="Rental Growth" note="-8% Quarterly Growth" note2="Aug '17 - Vrbo Data Added" className="mt-[19px] h-[235px]">
            <div className="pt-[1.6px]"><RentalGrowth /></div>
          </Card>
          <Card title="Amenities" className="mt-[19px] h-[347px]">
            <PercentBars rows={amenities} top={2557.5} first={2570.5} viewTop={2533.3} viewHeight={338.2} />
          </Card>
          <Ratings className="mt-[19px] h-[255px]" />
          <Activity className="mt-[19px] h-[218px]" />
          <Card title="Rental Settings" className="mt-[19px] h-[211px]">
            <Stacked title="Cancellation Policy" parts={policy} className="pt-[15px]" />
            <PercentBars rows={amenities.slice(7)} top={3552} first={3562.4} viewTop={3540.4} viewHeight={134.4} />
          </Card>
          <Ratings className="mt-[19px] h-[255px]" />
          <Activity className="mt-[19px] h-[218px]" />
          <Card title="Rental Settings" className="mt-[19px] h-[157px]">
            <Stacked title="Cancellation Policy" parts={policy} className="pt-[15px]" />
            <Stacked title="Minimum Stay" parts={minStay} className="pt-[17px]" />
          </Card>
        </main>
      </div>
      <Scrollbar />
    </div>
  );
}
